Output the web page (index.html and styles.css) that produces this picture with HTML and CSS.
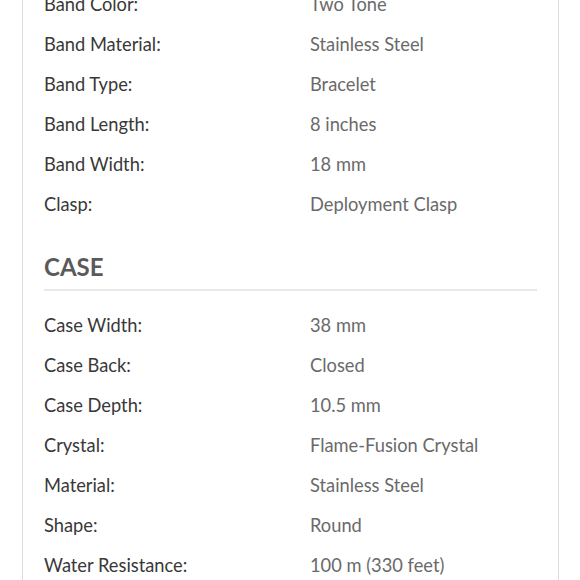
FILE: index.html
```html
<!DOCTYPE html>
<html>
<head>
<meta charset="utf-8">
<link rel="stylesheet" href="styles.css">
</head>
<body>
<div class="card">
  <div class="rows">
    <div class="row"><span class="label">Band Color:</span><span class="value">Two Tone</span></div>
    <div class="row"><span class="label">Band Material:</span><span class="value">Stainless Steel</span></div>
    <div class="row"><span class="label">Band Type:</span><span class="value">Bracelet</span></div>
    <div class="row"><span class="label">Band Length:</span><span class="value">8 inches</span></div>
    <div class="row"><span class="label">Band Width:</span><span class="value">18 mm</span></div>
    <div class="row"><span class="label">Clasp:</span><span class="value">Deployment Clasp</span></div>
  </div>
  <h2 class="section-title">CASE</h2>
  <div class="rows">
    <div class="row"><span class="label">Case Width:</span><span class="value">38 mm</span></div>
    <div class="row"><span class="label">Case Back:</span><span class="value">Closed</span></div>
    <div class="row"><span class="label">Case Depth:</span><span class="value">10.5 mm</span></div>
    <div class="row"><span class="label">Crystal:</span><span class="value">Flame-Fusion Crystal</span></div>
    <div class="row"><span class="label">Material:</span><span class="value">Stainless Steel</span></div>
    <div class="row"><span class="label">Shape:</span><span class="value">Round</span></div>
    <div class="row"><span class="label">Water Resistance:</span><span class="value">100 m (330 feet)</span></div>
  </div>
</div>
</body>
</html>
```
FILE: styles.css
```css
html, body {
  margin: 0;
  padding: 0;
  background: #ffffff;
  overflow: hidden;
}
body {
  font-family: Lato, "Liberation Sans", sans-serif;
}
.card {
  margin: -16px 21px 0 22px;
  border-left: 1px solid #dcdcdc;
  border-right: 1px solid #dcdcdc;
  padding: 0 21px 40px 21px;
  height: 700px;
}
.rows {
  display: flex;
  flex-direction: column;
}
.row {
  display: grid;
  grid-template-columns: 266px 1fr;
  height: 40px;
  align-items: center;
  font-size: 18.3px;
  line-height: 22px;
  font-weight: 400;
}
.label {
  color: #383838;
}
.value {
  color: #6a6a6a;
}
.section-title {
  margin: 28px 0 14px 0;
  padding-bottom: 7px;
  border-bottom: 2px solid #e8e8e8;
  font-size: 24px;
  line-height: 30px;
  font-weight: 700;
  color: #5a5a5a;
}
```
